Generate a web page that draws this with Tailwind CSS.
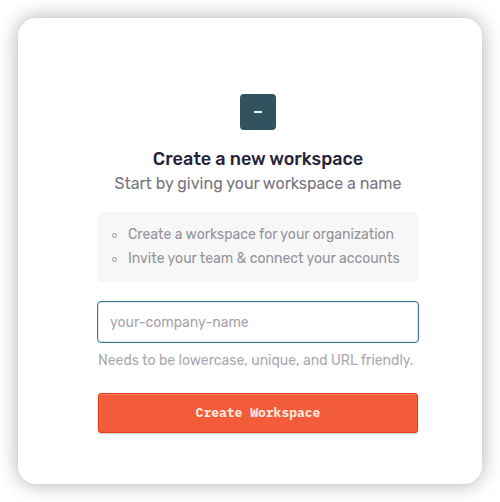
<!DOCTYPE html>
<html lang="en">
<head>
<meta charset="utf-8">
<title>Create a new workspace</title>
<script src="https://cdn.jsdelivr.net/npm/@tailwindcss/browser@4"></script>
</head>
<body class="h-[502px] w-[500px] overflow-hidden bg-white p-[18px] font-[Rubik,Roboto,sans-serif]">
<main class="flex h-[466px] w-[464px] flex-col items-center rounded-[18px] bg-white pt-[76px] shadow-[0_0_20px_rgba(0,0,0,0.32)]">
  <div class="ml-[16px] flex w-[320px] flex-col items-center">
    <div class="flex h-9 w-9 items-center justify-center rounded-[4px] bg-[#31525f]">
      <svg class="h-[2px] w-2" viewBox="0 0 8 2"><path d="M0 1h8" stroke="#eef1f2" stroke-width="2"/></svg>
    </div>
    <h1 class="mt-[17px] h-6 text-[18px] leading-6 font-medium whitespace-nowrap text-[#27253a]">Create a new workspace</h1>
    <p class="mt-[1px] h-6 text-[16px] leading-6 whitespace-nowrap text-[#777680]">Start by giving your workspace a name</p>
    <ul class="mt-4 flex h-[70px] w-full flex-col rounded-[4px] bg-[#f7f7f7] pt-[11px] pl-[14px] text-[14px] leading-6 whitespace-nowrap text-[#94939b]">
      <li class="flex items-center gap-[11px]"><span class="h-[5px] w-[5px] rounded-full border border-[#94939b]"></span><span>Create a workspace for your organization</span></li>
      <li class="flex items-center gap-[11px]"><span class="h-[5px] w-[5px] rounded-full border border-[#94939b]"></span><span>Invite your team &amp; connect your accounts</span></li>
    </ul>
    <input class="mt-[19px] -mx-px h-[42px] w-[322px] rounded-[4px] border border-[#3b7893] bg-white px-[12px] text-[14px] shadow-[inset_0_0_0_1px_#e1e7e9] outline-none placeholder:text-[#a6a5ab]" type="text" placeholder="your-company-name" aria-label="Workspace name">
    <p class="mt-[6px] h-6 w-full text-[14px] leading-6 whitespace-nowrap text-[#aaa9af]">Needs to be lowercase, unique, and URL friendly.</p>
    <button class="mt-[20px] h-[40px] w-full rounded-[3px] border border-[#e33b15] bg-[#f25c38] font-['IBM_Plex_Mono','Liberation_Mono',monospace] text-[13px] font-bold text-[#ffe8e1] shadow-[inset_0_1px_0_#f47c5d,0_1px_2px_rgba(0,0,0,0.22)]" type="button">Create Workspace</button>
  </div>
</main>
</body>
</html>
